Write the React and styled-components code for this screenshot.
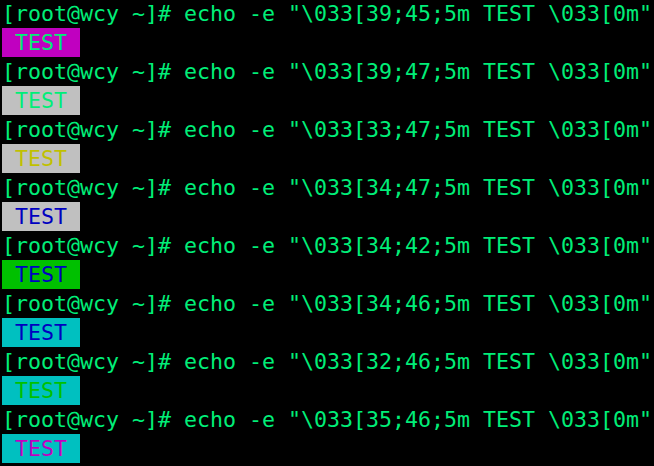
import React from 'react';
import styled, { createGlobalStyle } from 'styled-components';

const GlobalStyle = createGlobalStyle`
  html, body {
    margin: 0;
    padding: 0;
    background: #000;
    overflow: hidden;
  }
`;

const Screen = styled.div`
  width: 654px;
  height: 467px;
  margin-top: -1px;
  overflow: hidden;
  background: #000;
  padding: 0 0 0 2px;
  box-sizing: border-box;
  font-family: "DejaVu Sans Mono", "Liberation Mono", monospace;
  font-size: 21.6px;
  line-height: 29px;
  color: #00ee78;
  white-space: pre;
`;

const Line = styled.div`
  height: 29px;
`;

const Swatch = styled.span`
  display: inline-block;
  height: 29px;
  background: ${(p) => p.$bg};
  color: ${(p) => p.$fg};
`;

const palette = {
  39: '#00ee78',
  32: '#00c000',
  33: '#c0c000',
  34: '#0000c0',
  35: '#c000c0',
  42: '#00c000',
  45: '#c000c0',
  46: '#00c0c0',
  47: '#c0c0c0',
};

const runs = [
  [39, 45],
  [39, 47],
  [33, 47],
  [34, 47],
  [34, 42],
  [34, 46],
  [32, 46],
  [35, 46],
];

export default function App() {
  return (
    <>
      <GlobalStyle />
      <Screen>
        {runs.map(([fg, bg]) => (
          <React.Fragment key={`${fg}-${bg}`}>
            <Line>{`[root@wcy ~]# echo -e "\\033[${fg};${bg};5m TEST \\033[0m"`}</Line>
            <Line>
              <Swatch $fg={palette[fg]} $bg={palette[bg]}>{' TEST '}</Swatch>
            </Line>
          </React.Fragment>
        ))}
      </Screen>
    </>
  );
}
